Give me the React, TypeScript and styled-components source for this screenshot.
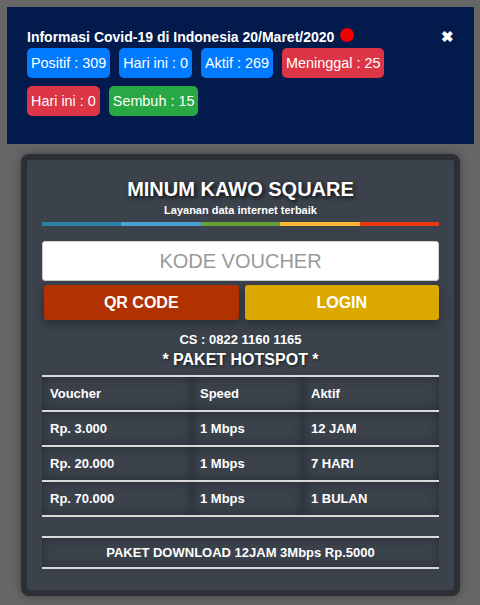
import React from "react";
import styled, { createGlobalStyle } from "styled-components";

const GlobalStyle = createGlobalStyle`
  html, body {
    margin: 0;
    padding: 0;
    background: #666666;
    font-family: "Liberation Sans", Arial, sans-serif;
  }
  * {
    box-sizing: border-box;
  }
`;

const Page = styled.div`
  width: 480px;
  min-height: 605px;
  padding: 7px 6px 0 7px;
`;

const Banner = styled.div`
  position: relative;
  background: #021a4c;
  height: 137px;
  padding: 22px 20px 0 20px;
  color: #fff;
`;

const BannerTitle = styled.div`
  display: flex;
  align-items: center;
  gap: 6px;
  font-size: 14px;
  font-weight: bold;
  line-height: 16px;
  margin-bottom: 3px;
`;

const LiveDot = styled.span`
  display: inline-block;
  width: 14px;
  height: 14px;
  border-radius: 50%;
  background: #ee0000;
  margin-top: -4px;
`;

const CloseButton = styled.span`
  position: absolute;
  top: 22px;
  right: 20px;
  font-size: 15px;
  font-weight: bold;
  line-height: 16px;
  color: #fff;
`;

const BadgeList = styled.div`
  display: flex;
  flex-wrap: wrap;
  gap: 8px 9px;
  width: 380px;
`;

const Badge = styled.span<{ $tone: "blue" | "red" | "green" }>`
  display: inline-block;
  height: 30px;
  line-height: 30px;
  padding: 0 4px;
  border-radius: 5px;
  font-size: 14.4px;
  color: #fff;
  background: ${(p) => (p.$tone === "blue" ? "#007bff" : p.$tone === "red" ? "#dc3545" : "#28a745")};
`;

const Card = styled.div`
  margin: 10px 0 0 14px;
  width: 439px;
  border: 6px solid #2c3036;
  border-radius: 8px;
  background: #3b424c;
  box-shadow: 0 0 10px rgba(0, 0, 0, 0.35);
  padding: 17px 15px 21px 15px;
  color: #fff;
  text-align: center;
`;

const Title = styled.h1`
  margin: 0;
  font-size: 20px;
  line-height: 24px;
  font-weight: bold;
  text-shadow: 2px 2px 4px rgba(0, 0, 0, 0.8);
`;

const Subtitle = styled.div`
  font-size: 11px;
  font-weight: bold;
  line-height: 14px;
  margin-top: 2px;
`;

const ColorBar = styled.div`
  display: flex;
  height: 4px;
  margin-top: 5px;
`;

const ColorSegment = styled.span<{ $color: string }>`
  flex: 1;
  background: ${(p) => p.$color};
`;

const VoucherInput = styled.input`
  display: block;
  width: 100%;
  height: 40px;
  margin-top: 15px;
  border: 1px solid #ccc;
  border-radius: 3px;
  background: #fff;
  text-align: center;
  font-family: "Liberation Sans", Arial, sans-serif;
  font-size: 20px;
  color: #333;
  &::placeholder {
    color: #999;
  }
`;

const ButtonRow = styled.div`
  display: grid;
  grid-template-columns: 1fr 1fr;
  gap: 6px;
  margin-top: 4px;
  padding-left: 2px;
`;

const ActionButton = styled.button<{ $color: string }>`
  height: 35px;
  border: none;
  border-radius: 3px;
  background: ${(p) => p.$color};
  color: #fff;
  font-family: "Liberation Sans", Arial, sans-serif;
  font-size: 16px;
  font-weight: bold;
  box-shadow: 0 4px 10px rgba(0, 0, 0, 0.3);
`;

const ContactLine = styled.div`
  margin-top: 12px;
  font-size: 13px;
  font-weight: bold;
  line-height: 16px;
`;

const SectionTitle = styled.div`
  margin-top: 2px;
  font-size: 16px;
  font-weight: bold;
  line-height: 20px;
  text-shadow: 1px 1px 3px rgba(0, 0, 0, 0.6);
`;

const PriceTable = styled.table`
  width: 100%;
  margin-top: 5px;
  border-collapse: collapse;
  text-align: left;
  font-size: 13px;
  font-weight: bold;
`;

const Cell = styled.td<{ $width?: number }>`
  height: 35px;
  padding: 0 8px;
  border-top: 2px solid #d9d9d9;
  width: ${(p) => (p.$width ? `${p.$width}px` : "auto")};
  box-shadow: inset 0 0 12px rgba(0, 0, 0, 0.35);
  vertical-align: middle;
`;

const LastRow = styled.tr`
  td {
    border-bottom: 2px solid #d9d9d9;
  }
`;

const DownloadBox = styled.div`
  margin-top: 19px;
  height: 33px;
  line-height: 29px;
  border-top: 2px solid #d9d9d9;
  border-bottom: 2px solid #d9d9d9;
  font-size: 13px;
  font-weight: bold;
  box-shadow: inset 0 0 12px rgba(0, 0, 0, 0.3);
`;

const stats: { label: string; tone: "blue" | "red" | "green" }[] = [
  { label: "Positif : 309", tone: "blue" },
  { label: "Hari ini : 0", tone: "blue" },
  { label: "Aktif : 269", tone: "blue" },
  { label: "Meninggal : 25", tone: "red" },
  { label: "Hari ini : 0", tone: "red" },
  { label: "Sembuh : 15", tone: "green" },
];

const stripes = ["#2f7ea3", "#48a1d2", "#68a037", "#fbb732", "#e8390f"];

const packages = [
  ["Rp. 3.000", "1 Mbps", "12 JAM"],
  ["Rp. 20.000", "1 Mbps", "7 HARI"],
  ["Rp. 70.000", "1 Mbps", "1 BULAN"],
];

export default function App() {
  return (
    <Page>
      <GlobalStyle />
      <Banner>
        <BannerTitle>
          Informasi Covid-19 di Indonesia 20/Maret/2020 <LiveDot />
        </BannerTitle>
        <CloseButton>✖</CloseButton>
        <BadgeList>
          {stats.map((s, i) => (
            <Badge key={i} $tone={s.tone}>
              {s.label}
            </Badge>
          ))}
        </BadgeList>
      </Banner>

      <Card>
        <Title>MINUM KAWO SQUARE</Title>
        <Subtitle>Layanan data internet terbaik</Subtitle>
        <ColorBar>
          {stripes.map((c) => (
            <ColorSegment key={c} $color={c} />
          ))}
        </ColorBar>
        <VoucherInput placeholder="KODE VOUCHER" />
        <ButtonRow>
          <ActionButton $color="#b13100">QR CODE</ActionButton>
          <ActionButton $color="#dba800">LOGIN</ActionButton>
        </ButtonRow>
        <ContactLine>CS : 0822 1160 1165</ContactLine>
        <SectionTitle>* PAKET HOTSPOT *</SectionTitle>
        <PriceTable>
          <tbody>
            <tr>
              <Cell $width={150}>Voucher</Cell>
              <Cell $width={111}>Speed</Cell>
              <Cell>Aktif</Cell>
            </tr>
            {packages.map((row, i) => {
              const cells = row.map((v) => <Cell key={v}>{v}</Cell>);
              return i === packages.length - 1 ? <LastRow key={i}>{cells}</LastRow> : <tr key={i}>{cells}</tr>;
            })}
          </tbody>
        </PriceTable>
        <DownloadBox>PAKET DOWNLOAD 12JAM 3Mbps Rp.5000</DownloadBox>
      </Card>
    </Page>
  );
}
